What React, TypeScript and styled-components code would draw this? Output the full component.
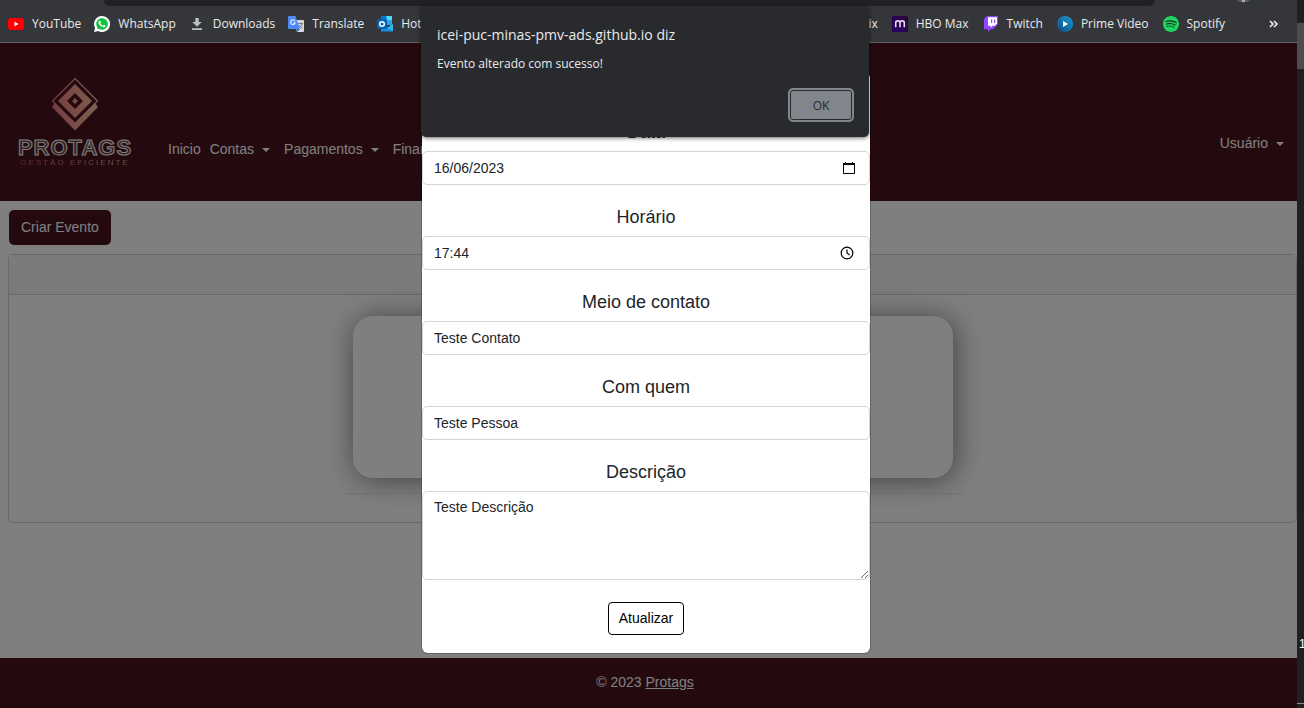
import React from "react";
import styled, { createGlobalStyle } from "styled-components";
import { FaWhatsapp } from "react-icons/fa";
import { SiSpotify } from "react-icons/si";

const GlobalStyle = createGlobalStyle`
  *, *::before, *::after { box-sizing: border-box; }
  body {
    margin: 0;
    background: #1f2021;
    font-family: "Liberation Sans", Arial, sans-serif;
    font-size: 14px;
    line-height: 21px;
    color: #212529;
  }
  button, input, textarea { font: inherit; }
`;

const Desktop = styled.div`
  display: flex;
  min-height: 100vh;
  overflow: hidden;
`;

const Browser = styled.div`
  position: relative;
  display: flex;
  flex: 1;
  flex-direction: column;
  min-width: 0;
`;

/* browser chrome */
const Chrome = styled.header`
  height: 43px;
  background: #35363a;
  border-bottom: 1px solid #5f6165;
  overflow: hidden;
`;

const TabEdge = styled.div`
  display: flex;
  height: 6px;
  padding-left: 104px;
`;

const AddressBar = styled.div`
  flex: 1;
  background: #202124;
  border-radius: 0 0 14px 14px;
`;

const ProfileSlot = styled.div`
  display: flex;
  width: 142px;
  padding-left: 81px;
`;

const Bookmarks = styled.nav`
  display: flex;
  justify-content: space-between;
  height: 36px;
  padding: 0 13px 0 8px;
  font-family: "Open Sans", "Noto Sans", sans-serif;
  font-size: 12px;
  line-height: 16px;
`;

const BookmarkGroup = styled.div<{ $gap: number }>`
  display: flex;
  align-items: center;
  gap: ${({ $gap }) => $gap}px;
`;

const Bookmark = styled.a`
  display: flex;
  align-items: center;
  gap: 8px;
  color: #e8eaed;
  text-decoration: none;
  white-space: nowrap;

  svg { display: block; flex: none; }
`;

const MoreBookmarks = styled.button`
  display: flex;
  width: 20px;
  margin-left: 25px;
  padding: 0;
  border: 0;
  background: none;
  justify-content: center;
`;

/* page */
const Page = styled.div`
  position: relative;
  display: flex;
  flex: 1;
  flex-direction: column;
  background: #fff;
`;

const SiteHeader = styled.header`
  display: flex;
  height: 158px;
  padding: 0 8px 0 16px;
  background: #48141c;
  color: #fff;
`;

const Brand = styled.a`
  display: flex;
  flex-direction: column;
  align-items: center;
  width: 118px;
  padding-top: 34px;
  color: #fff;
  text-decoration: none;
  white-space: nowrap;
`;

const BrandName = styled.span`
  margin-top: 6px;
  font-size: 22px;
  line-height: 22px;
  font-weight: 700;
  letter-spacing: 1px;
  color: rgba(255, 255, 255, 0.2);
  -webkit-text-stroke: 1px #fff;
`;

const BrandTagline = styled.span`
  font-size: 8px;
  line-height: 8px;
  letter-spacing: 2px;
  color: transparent;
  background: linear-gradient(90deg, #d2506e, #e6b496);
  background-clip: text;
  -webkit-background-clip: text;
`;

const MainNav = styled.nav`
  display: flex;
  flex: 1;
  gap: 9px;
  padding: 96px 0 0 34px;
`;

const UserNav = styled.nav`
  padding-top: 90px;
`;

const NavLink = styled.a`
  color: #fff;
  text-decoration: none;
  white-space: nowrap;
`;

const NavMenu = styled.button`
  display: flex;
  align-items: center;
  gap: 8px;
  height: 21px;
  margin-right: 5px;
  padding: 0;
  border: 0;
  background: none;
  color: #fff;
  white-space: nowrap;

  &::after {
    content: "";
    border: 4px solid transparent;
    border-top-color: currentColor;
    border-bottom: 0;
  }
`;

const Main = styled.main`
  flex: 1;
  padding: 9px 0 0 8px;
`;

const CreateButton = styled.button`
  display: block;
  height: 35px;
  margin: 0 0 9px 1px;
  padding: 0 12px;
  border: 0;
  border-radius: 5px;
  background: #48141c;
  color: #fff;
`;

const Card = styled.section`
  border: 1px solid #d0d0d0;
  border-radius: 5px;
`;

const CardHeader = styled.div`
  height: 40px;
  border-bottom: 1px solid #d0d0d0;
  background: #f7f7f7;
`;

const CardBody = styled.div`
  width: 616px;
  margin: 0 auto;
  padding: 21px 8px 28px;
`;

const EventCard = styled.article`
  height: 162px;
  border-radius: 20px;
  background: #fff;
  box-shadow: 2px 2px 30px rgba(0, 0, 0, 0.5);
`;

const Divider = styled.hr`
  height: 1px;
  margin: 15px -8px 0;
  border: 0;
  background: #dcdcdc;
`;

const SiteFooter = styled.footer`
  height: 50px;
  padding: 14px 7px 0 0;
  background: #48141c;
  color: #fff;
  text-align: center;

  a { color: #fff; }
`;

/* event form */
const Backdrop = styled.div`
  position: absolute;
  inset: 0;
  display: flex;
  align-items: flex-start;
  justify-content: center;
  padding: 29px 5px 0 0;
  background: rgba(0, 0, 0, 0.5);
`;

const EventForm = styled.form`
  display: flex;
  flex-direction: column;
  gap: 18px;
  width: 448px;
  padding: 46px 0 18px;
  border-radius: 6px;
  background: #fff;
  box-shadow: 0 0 0 1px rgba(0, 0, 0, 0.2);
`;

const Field = styled.div`
  display: flex;
  flex-direction: column;
`;

const Label = styled.label`
  margin-bottom: 4px;
  font-size: 18px;
  line-height: 29px;
  text-align: center;
`;

const Control = styled.div`
  display: flex;
  align-items: center;
  height: 34px;
  padding-right: 12px;
  border: 1px solid #ced4da;
  border-radius: 5px;

  svg { flex: none; }
`;

const Input = styled.input`
  flex: 1;
  min-width: 0;
  height: 32px;
  padding: 0 11px;
  border: 0;
  outline: 0;
  background: none;
  color: #212529;
`;

const TextArea = styled.textarea`
  display: block;
  height: 89px;
  padding: 5px 11px;
  border: 1px solid #ced4da;
  border-radius: 5px;
  color: #212529;
`;

const SubmitButton = styled.button`
  align-self: center;
  height: 33px;
  margin-top: 4px;
  padding: 0 10px;
  border: 1px solid #000;
  border-radius: 4px;
  background: #fff;
  color: #000;
`;

/* browser alert */
const AlertLayer = styled.div`
  position: absolute;
  inset: 0 0 auto;
  display: flex;
  justify-content: center;
  padding: 6px 7px 0 0;
`;

const Alert = styled.div`
  display: flex;
  flex-direction: column;
  width: 448px;
  height: 131px;
  padding: 18px 15px 15px 16px;
  border-radius: 5px;
  background: #292a2d;
  box-shadow: 0 1px 4px rgba(0, 0, 0, 0.6);
  color: #e8eaed;
  font-family: "Open Sans", "Noto Sans", sans-serif;
`;

const AlertTitle = styled.h1`
  margin: 0;
  font-size: 14px;
  line-height: 22px;
  font-weight: 400;
`;

const AlertMessage = styled.p`
  margin: 9px 0 0;
  font-size: 12px;
  line-height: 18px;
`;

const AlertButton = styled.button`
  align-self: flex-end;
  width: 66px;
  height: 34px;
  margin-top: auto;
  border: 2px solid #80868b;
  border-radius: 5px;
  background: #80868b;
  box-shadow: inset 0 0 0 1px #292a2d;
  color: #292a2d;
  font-size: 12px;
  font-weight: 500;
`;

/* strip of the window behind the browser */
const BackWindow = styled.aside`
  display: flex;
  flex-direction: column;
  width: 7px;
  overflow: hidden;
  background: #1f2021;
  color: #fff;
`;

const BackWindowTop = styled.div`
  height: 46px;
  margin-top: 23px;
  background: #4d4d4d;
`;

const BackWindowFoot = styled.div`
  height: 65px;
  margin-top: auto;
  padding-left: 2px;
  font-size: 12px;
  line-height: 12px;
`;

const BackWindowLine = styled.div`
  height: 5px;
  border-top: 1px solid #8a8a8a;
`;

const YouTubeIcon = () => (
  <svg width="16" height="16" viewBox="0 0 16 16">
    <rect y="2" width="16" height="12" rx="3" fill="#f00" />
    <path d="M6.5 5.7v4.6l4-2.3z" fill="#fff" />
  </svg>
);

const WhatsAppIcon = () => (
  <svg width="16" height="16" viewBox="0 0 16 16">
    <path d="M8 0a8 8 0 1 1-3.8 15L0 16l1.100-4A8 8 0 0 1 8 0z" fill="#fff" />
    <circle cx="8" cy="8" r="6.500" fill="#12c143" />
    <FaWhatsapp x="0" y="0" size={16} color="#fff" />
  </svg>
);

const DownloadIcon = () => (
  <svg width="16" height="16" viewBox="0 0 16 16" fill="#bdc1c6">
    <path d="M6.300 2h3.400v4h3L8 10.700 3.300 6h3zM3 12.200h10V14H3z" />
  </svg>
);

const TranslateIcon = () => (
  <svg width="16" height="16" viewBox="0 0 16 16">
    <path d="M6 4h9a1 1 0 0 1 1 1v10a1 1 0 0 1-1 1H9z" fill="#d5d8dc" />
    <path d="M8.500 13H12l-3 3z" fill="#3467d6" />
    <path d="M1 0h6.500L12 13H1a1 1 0 0 1-1-1V1a1 1 0 0 1 1-1z" fill="#4c8bf5" />
    <path d="M7 5.200A2.300 2.300 0 1 0 7.100 7H5" fill="none" stroke="#e8f0ff" strokeWidth="1.100" />
    <path d="M10.300 7.500h4.700M12.600 6.500v1M14 7.500c-.3 2-1.500 3.500-3 4.500M11.300 9c.7 1.500 1.700 2.500 3.200 3.500" fill="none" stroke="#757b83" />
  </svg>
);

const OutlookIcon = () => (
  <svg width="16" height="16" viewBox="0 0 16 16">
    <path d="M4 0h11v9H4z" fill="#28a8ea" />
    <path d="M4 0h5.500v4H4z" fill="#0078d4" />
    <path d="M9.500 0H15v4H9.500z" fill="#50d9ff" />
    <path d="M4 15.500V9l6 3 6-4v7.500z" fill="#1490df" />
    <path d="m10 12 6-4v7z" fill="#35b8f1" />
    <rect y="3" width="10" height="10" rx="1" fill="#0364b8" />
    <circle cx="5" cy="8" r="2.300" fill="none" stroke="#fff" strokeWidth="1.500" />
  </svg>
);

const HboIcon = () => (
  <svg width="16" height="16" viewBox="0 0 16 16">
    <defs>
      <linearGradient id="hbo" x1="0" y1="1" x2="1" y2="0">
        <stop offset="0" stopColor="#2a006b" />
        <stop offset="1" stopColor="#2b0838" />
      </linearGradient>
    </defs>
    <rect width="16" height="16" rx="1" fill="url(#hbo)" />
    <path d="M3.700 11.300V6.900q0-2 2.200-2 2.100 0 2.100 2v4.400M8 6.900q0-2 2.200-2 2.100 0 2.100 2v4.400" fill="none" stroke="#e6d9ee" strokeWidth="1.600" />
  </svg>
);

const TwitchIcon = () => (
  <svg width="16" height="16" viewBox="0 0 16 16">
    <path d="M4 0 1 3v10.300h4V16l2.700-2.700H10L15 8V0z" fill="#9146ff" />
    <path d="M5 1.200h9v6.500L12 9.800H9.600l-2 2v-2H5z" fill="#fff" />
    <path d="M8 3.400h1.200v3.500H8zM11 3.400h1.200v3.500H11z" fill="#9146ff" />
  </svg>
);

const PrimeIcon = () => (
  <svg width="16" height="16" viewBox="0 0 16 16">
    <defs>
      <linearGradient id="prime" x1="0" y1="1" x2="1" y2="0">
        <stop offset="0" stopColor="#0b4a86" />
        <stop offset="1" stopColor="#1c9bd1" />
      </linearGradient>
    </defs>
    <circle cx="8" cy="8" r="8" fill="url(#prime)" />
    <path d="M6 5v6l5-3z" fill="#fff" />
  </svg>
);

const SpotifyIcon = () => (
  <svg width="16" height="16" viewBox="0 0 16 16">
    <circle cx="8" cy="8" r="7" fill="#183d27" />
    <SiSpotify size={16} color="#1ed760" />
  </svg>
);

const NetflixIcon = () => (
  <svg width="16" height="16" viewBox="0 0 16 16">
    <path d="M4 1h3l2 6V1h3v14H9L7 9v6H4z" fill="#e50914" />
  </svg>
);

const ChevronsIcon = () => (
  <svg width="12" height="16" viewBox="0 0 12 16" fill="none" stroke="#e8eaed" strokeWidth="1.700">
    <path d="m2 5 3 3-3 3M6 5l3 3-3 3" />
  </svg>
);

const ProfileIcon = () => (
  <svg width="16" height="3" viewBox="0 0 16 3">
    <path d="M1 0h13q-3 3-7 2.500T1 0z" fill="#48677c" />
    <path d="M6 0h3v2H6z" fill="#c9a184" />
  </svg>
);

const BrandMark = () => (
  <svg width="48" height="54" viewBox="0 0 48 54">
    <defs>
      <linearGradient id="brand" gradientUnits="userSpaceOnUse" x1="1" y1="27" x2="47" y2="27">
        <stop offset="0" stopColor="#f07480" />
        <stop offset="1" stopColor="#f7c2a0" />
      </linearGradient>
    </defs>
    <path d="M24 1.500 46.500 24 24 46.500 1.500 24z" fill="none" stroke="url(#brand)" strokeWidth="1.200" />
    <path d="M4 26 1 30l23 23.500L47 30l-3-4-20 20z" fill="url(#brand)" />
    <path fillRule="evenodd" d="M24 7 41 24 24 41 7 24zM24 16l-8 8 8 8 8-8z" fill="url(#brand)" />
    <path d="m24 21 3 3-3 3-3-3z" fill="url(#brand)" />
  </svg>
);

const CalendarIcon = () => (
  <svg width="16" height="16" viewBox="0 0 16 16">
    <path d="M2.500 3.500h11v10h-11z" fill="none" stroke="#000" />
    <path d="M2 3h12v2H2zM4 2h1v1H4zM11 2h1v1h-1z" />
  </svg>
);

const ClockIcon = () => (
  <svg width="18" height="16" viewBox="0 0 18 16" fill="none" stroke="#000" strokeWidth="1.200">
    <circle cx="8" cy="8" r="5.800" />
    <path d="M8 4.500V8l2.600 2" />
  </svg>
);

const leftBookmarks = [
  { name: "YouTube", Icon: YouTubeIcon },
  { name: "WhatsApp", Icon: WhatsAppIcon },
  { name: "Downloads", Icon: DownloadIcon },
  { name: "Translate", Icon: TranslateIcon },
  { name: "Hot", Icon: OutlookIcon },
];

const rightBookmarks = [
  { name: "Netflix", Icon: NetflixIcon },
  { name: "HBO Max", Icon: HboIcon },
  { name: "Twitch", Icon: TwitchIcon },
  { name: "Prime Video", Icon: PrimeIcon },
  { name: "Spotify", Icon: SpotifyIcon },
];

const fields = [
  { id: "data", label: "Data", value: "16/06/2023", Icon: CalendarIcon },
  { id: "horario", label: "Horário", value: "17:44", Icon: ClockIcon },
  { id: "contato", label: "Meio de contato", value: "Teste Contato" },
  { id: "pessoa", label: "Com quem", value: "Teste Pessoa" },
];

export default function App() {
  return (
    <Desktop>
      <GlobalStyle />
      <Browser>
        <Chrome>
          <TabEdge>
            <AddressBar />
            <ProfileSlot>
              <ProfileIcon />
            </ProfileSlot>
          </TabEdge>
          <Bookmarks>
            <BookmarkGroup $gap={13}>
              {leftBookmarks.map(({ name, Icon }) => (
                <Bookmark key={name} href="#">
                  <Icon />
                  {name}
                </Bookmark>
              ))}
            </BookmarkGroup>
            <BookmarkGroup $gap={14}>
              {rightBookmarks.map(({ name, Icon }) => (
                <Bookmark key={name} href="#">
                  <Icon />
                  {name}
                </Bookmark>
              ))}
              <MoreBookmarks type="button" aria-label="Mais favoritos">
                <ChevronsIcon />
              </MoreBookmarks>
            </BookmarkGroup>
          </Bookmarks>
        </Chrome>

        <Page>
          <SiteHeader>
            <Brand href="#">
              <BrandMark />
              <BrandName>PROTAGS</BrandName>
              <BrandTagline>GESTÃO EFICIENTE</BrandTagline>
            </Brand>
            <MainNav>
              <NavLink href="#">Inicio</NavLink>
              <NavMenu type="button">Contas</NavMenu>
              <NavMenu type="button">Pagamentos</NavMenu>
              <NavLink href="#">Financeiro</NavLink>
            </MainNav>
            <UserNav>
              <NavMenu type="button">Usuário</NavMenu>
            </UserNav>
          </SiteHeader>

          <Main>
            <CreateButton type="button">Criar Evento</CreateButton>
            <Card>
              <CardHeader />
              <CardBody>
                <EventCard />
                <Divider />
              </CardBody>
            </Card>
          </Main>

          <SiteFooter>
            © 2023 <a href="#">Protags</a>
          </SiteFooter>

          <Backdrop>
            <EventForm>
              {fields.map(({ id, label, value, Icon }) => (
                <Field key={id}>
                  <Label htmlFor={id}>{label}</Label>
                  <Control>
                    <Input id={id} type="text" defaultValue={value} />
                    {Icon && <Icon />}
                  </Control>
                </Field>
              ))}
              <Field>
                <Label htmlFor="descricao">Descrição</Label>
                <TextArea id="descricao" defaultValue="Teste Descrição" />
              </Field>
              <SubmitButton type="button">Atualizar</SubmitButton>
            </EventForm>
          </Backdrop>
        </Page>

        <AlertLayer>
          <Alert role="alertdialog" aria-labelledby="alert-title">
            <AlertTitle id="alert-title">icei-puc-minas-pmv-ads.github.io diz</AlertTitle>
            <AlertMessage>Evento alterado com sucesso!</AlertMessage>
            <AlertButton type="button">OK</AlertButton>
          </Alert>
        </AlertLayer>
      </Browser>

      <BackWindow>
        <BackWindowTop />
        <BackWindowFoot>1</BackWindowFoot>
        <BackWindowLine />
      </BackWindow>
    </Desktop>
  );
}
